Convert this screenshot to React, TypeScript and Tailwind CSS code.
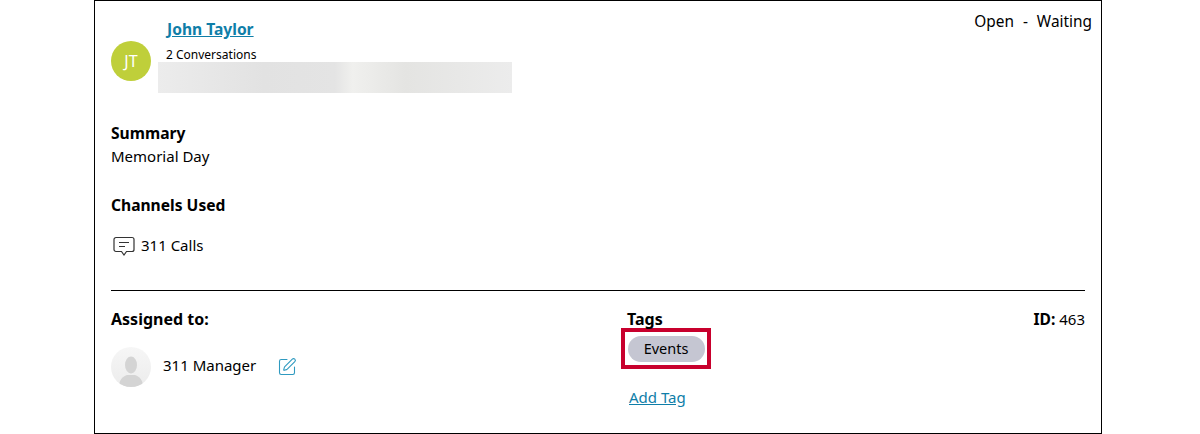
import React from 'react';
import { SquarePen } from 'lucide-react';

const ChatIcon = () => (
    <svg className="mt-[1px]" width="22" height="21" viewBox="0 0 22 21" fill="none" stroke="#333333" strokeWidth="1.2">
        <path d="M3 1.500h16a2 2 0 0 1 2 2v10a2 2 0 0 1-2 2h-5.500l-2.500 3.500-2.500-3.500H3a2 2 0 0 1-2-2v-10a2 2 0 0 1 2-2z" />
        <path d="M6 6.500h10M6 10.500h6" />
    </svg>
);

const PersonAvatar = () => (
    <div className="w-10 h-10 rounded-full overflow-hidden bg-[linear-gradient(180deg,#f6f6f6,#ececec)] flex items-end justify-center shrink-0">
        <svg width="40" height="40" viewBox="0 0 40 40" fill="#d4d4d4">
            <ellipse cx="20" cy="18" rx="6" ry="8.500" />
            <path d="M8 40c0-7 3-10 8-12h8c5 2 8 5 8 12z" />
        </svg>
    </div>
);

export default function App() {
    return (
        <div className="w-[1200px] h-[434px] bg-white font-['Noto_Sans',sans-serif] text-[15px] text-black">
            <div className="ml-[94px] w-[1008px] h-[434px] border border-black pl-4 pr-4 flex flex-col">
                <div className="flex justify-between h-[93px]">
                    <div className="flex">
                        <div className="mt-10 w-10 h-10 rounded-full bg-[#bfcf3a] text-white flex items-center justify-center text-[16px]">JT</div>
                        <div className="ml-[7px] flex flex-col">
                            <a className="ml-[9px] mt-[18px] text-[15.6px] leading-5 font-bold text-[#0f7ea8] underline">John Taylor</a>
                            <span className="ml-2 mt-[8px] text-[12px] leading-[15px]">2 Conversations</span>
                            <div className="w-[354px] h-[31px] bg-[linear-gradient(90deg,#ececec_0%,#e2e2e2_30%,#e4e4e4_50%,#f0f0ee_55%,#e4e4e2_70%,#ececec_100%)]"></div>
                        </div>
                    </div>
                    <div className="-mr-[7px] mt-[11px] leading-5 text-[15.4px] whitespace-pre [word-spacing:0.5px]">Open  -  Waiting</div>
                </div>
                <div className="mt-[29px] font-bold leading-5 text-[15.6px]">Summary</div>
                <div className="mt-[3px] leading-5">Memorial Day</div>
                <div className="mt-[29px] font-bold leading-5 text-[15.6px]">Channels Used</div>
                <div className="mt-[20px] flex items-center gap-[6px] leading-5 pl-[2px]">
                    <ChatIcon />
                    <span className="mb-[2px]">311 Calls</span>
                </div>
                <div className="mt-[33px] border-t border-black"></div>
                <div className="mt-[18px] flex">
                    <div className="w-[516px]">
                        <div className="font-bold leading-5 text-[16px]">Assigned to:</div>
                        <div className="mt-[18px] flex items-center">
                            <PersonAvatar />
                            <span className="ml-3 mb-[4px] leading-5">311 Manager</span>
                            <SquarePen className="ml-[21px] text-[#2f9ac0]" size={20} strokeWidth={1.3} />
                        </div>
                    </div>
                    <div className="flex-1">
                        <div className="font-bold leading-5 text-[16px]">Tags</div>
                        <div className="-ml-[6px] -mt-[1px] w-[90px] h-[41px] border-[4px] border-[#c8002d] flex items-center justify-center">
                            <span className="w-[77px] h-[26px] rounded-full bg-[#c5c6d2] text-[14.5px] flex items-center justify-center">Events</span>
                        </div>
                        <a className="block ml-[2px] mt-[18px] leading-5 text-[#0f7ea8] underline">Add Tag</a>
                    </div>
                    <div className="leading-5 text-[15px]"><span className="font-bold text-[15.6px]">ID:</span> 463</div>
                </div>
            </div>
        </div>
    );
}
